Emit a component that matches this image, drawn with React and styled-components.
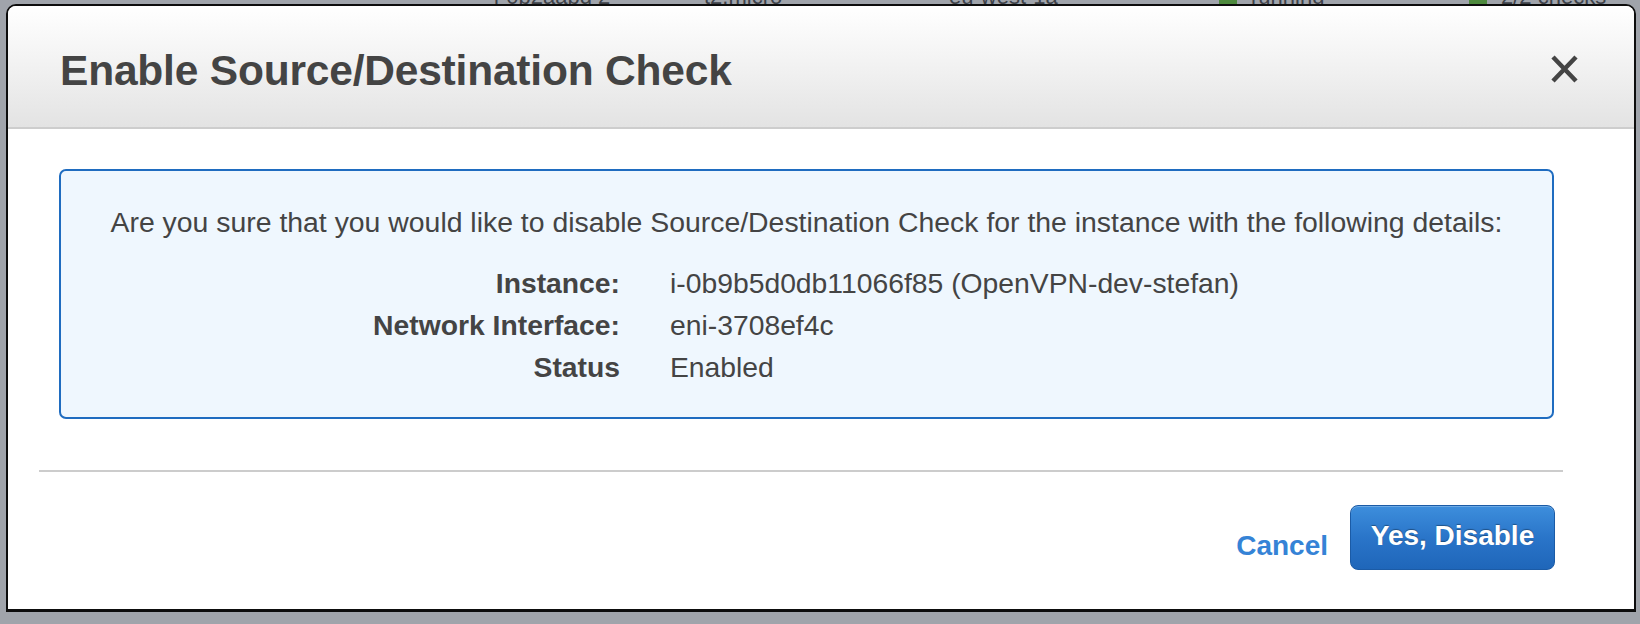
import React from "react";
import styled, { createGlobalStyle } from "styled-components";

const GlobalStyle = createGlobalStyle`
  html, body {
    margin: 0;
    padding: 0;
    background: #a0a4ab;
    font-family: "Liberation Sans", Arial, Helvetica, sans-serif;
  }
`;

const details = [
  { label: "Instance:", value: "i-0b9b5d0db11066f85 (OpenVPN-dev-stefan)" },
  { label: "Network Interface:", value: "eni-3708ef4c" },
  { label: "Status", value: "Enabled" },
];

const backdropCells = [
  { text: "i-0b2aabd 2", width: 210 },
  { text: "t2.micro", width: 245 },
  { text: "eu-west-1a", width: 270 },
  { text: "running", width: 250, dot: true },
  { text: "2/2 checks", width: 160, dot: true },
];

const App = () => {
  return (
    <>
      <GlobalStyle />
      <Page>
        <Backdrop>
          <BackdropRow>
            {backdropCells.map((c) => (
              <BackdropCell key={c.text} $width={c.width}>
                {c.dot && <Marker />}
                {c.text}
              </BackdropCell>
            ))}
          </BackdropRow>
        </Backdrop>

        <Modal>
          <Header>
            <Title>Enable Source/Destination Check</Title>
            <CloseButton aria-label="Close">
              <svg width="27" height="28" viewBox="0 0 27 28">
                <path
                  d="M2 2 L25 26 M25 2 L2 26"
                  stroke="#444"
                  strokeWidth="4.5"
                  fill="none"
                />
              </svg>
            </CloseButton>
          </Header>

          <Body>
            <InfoBox>
              <Question>
                Are you sure that you would like to disable
                Source/Destination Check for the instance with the following
                details:
              </Question>
              <DetailGrid>
                {details.map((d) => (
                  <React.Fragment key={d.label}>
                    <Label>{d.label}</Label>
                    <Value>{d.value}</Value>
                  </React.Fragment>
                ))}
              </DetailGrid>
            </InfoBox>
          </Body>

          <Divider />

          <Footer>
            <CancelLink href="#">Cancel</CancelLink>
            <PrimaryButton>Yes, Disable</PrimaryButton>
          </Footer>
        </Modal>
      </Page>
    </>
  );
};

const Page = styled.div`
  position: relative;
  width: 1640px;
  height: 624px;
  overflow: hidden;
  background: #a0a4ab;
`;

const Backdrop = styled.div`
  padding-left: 494px;
`;

const BackdropRow = styled.div`
  display: flex;
  margin-top: -13px;
  height: 20px;
  font-size: 22px;
  line-height: 20px;
  color: #3d4148;
`;

const BackdropCell = styled.div`
  display: flex;
  align-items: flex-end;
  gap: 14px;
  width: ${(p) => p.$width}px;
`;

const Marker = styled.span`
  display: inline-block;
  width: 18px;
  height: 18px;
  background: #4e8a3e;
`;

const Modal = styled.div`
  position: absolute;
  top: 4px;
  left: 6px;
  width: 1630px;
  height: 608px;
  box-sizing: border-box;
  border: 2px solid #0d0d0d;
  border-bottom-width: 3px;
  border-radius: 10px 10px 0 0;
  background: #fff;
  overflow: hidden;
`;

const Header = styled.div`
  display: flex;
  align-items: center;
  justify-content: space-between;
  height: 121px;
  padding: 0 56px 0 52px;
  background: linear-gradient(to bottom, #ffffff 0%, #f3f3f3 45%, #e3e3e3 100%);
  border-bottom: 2px solid #cdcdcd;
`;

const Title = styled.h1`
  margin: 0;
  padding-top: 8px;
  font-size: 42.5px;
  font-weight: bold;
  color: #444;
  letter-spacing: -0.2px;
`;

const CloseButton = styled.button`
  display: flex;
  padding: 0;
  margin-top: 4px;
  border: none;
  background: none;
  cursor: pointer;
`;

const Body = styled.div`
  padding: 40px 80px 0 51px;
`;

const InfoBox = styled.div`
  box-sizing: border-box;
  height: 250px;
  padding-top: 31px;
  border: 2px solid #1f6cc0;
  border-radius: 7px;
  background: #eff7fe;
  color: #444;
`;

const Question = styled.p`
  margin: 0;
  font-size: 28.4px;
  line-height: 40px;
  text-align: center;
`;

const DetailGrid = styled.div`
  display: grid;
  grid-template-columns: 559px 1fr;
  column-gap: 50px;
  margin-top: 20px;
  font-size: 28.3px;
  line-height: 42px;
`;

const Label = styled.div`
  text-align: right;
  font-weight: bold;
`;

const Value = styled.div``;

const Divider = styled.hr`
  margin: 51px 71px 0 31px;
  border: none;
  height: 2px;
  background: #cccccc;
`;

const Footer = styled.div`
  display: flex;
  justify-content: flex-end;
  align-items: center;
  gap: 22px;
  margin-top: 33px;
  padding-right: 79px;
`;

const CancelLink = styled.a`
  margin-top: 16px;
  font-size: 28px;
  font-weight: bold;
  color: #3583d6;
  text-decoration: none;
`;

const PrimaryButton = styled.button`
  box-sizing: border-box;
  width: 205px;
  height: 65px;
  padding: 0 0 4px;
  border: 1px solid #1b5ba6;
  border-radius: 8px;
  background: linear-gradient(to bottom, #3d8edc 0%, #2a75c9 50%, #1f66b9 100%);
  box-shadow: inset 0 1px 0 rgba(255, 255, 255, 0.25);
  color: #fff;
  font-family: inherit;
  font-size: 28px;
  font-weight: bold;
  text-shadow: 0 -1px 1px rgba(0, 0, 0, 0.35);
  cursor: pointer;
`;

export default App;
